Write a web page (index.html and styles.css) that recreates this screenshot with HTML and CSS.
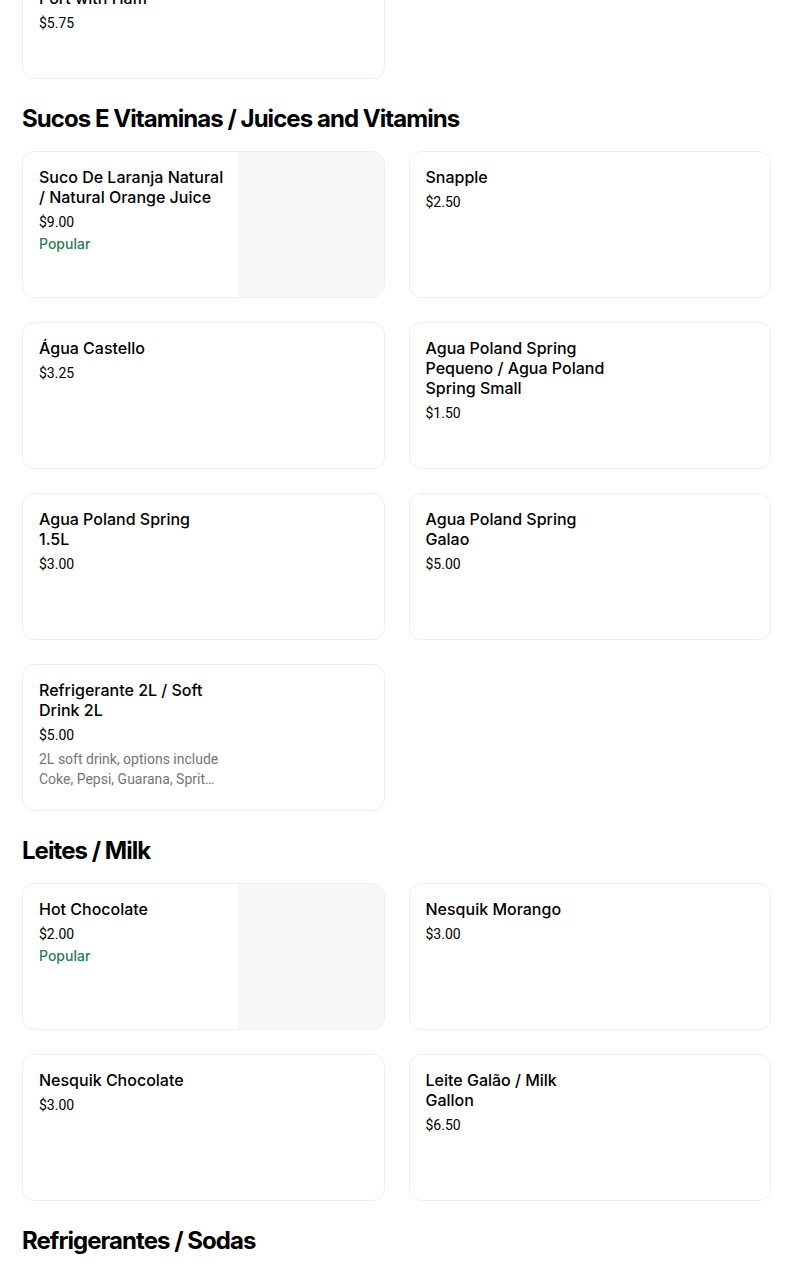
FILE: index.html
```html
<!DOCTYPE html>
<html lang="pt">
<head>
<meta charset="utf-8">
<title>Menu</title>
<link rel="stylesheet" href="styles.css">
</head>
<body>
<main class="menu">
  <section class="section section-first">
    <div class="grid">
      <div class="card">
        <div class="info">
          <div class="title">Pão Português Com Presunto / Bread<br>Port with Ham</div>
          <div class="price">$5.75</div>
        </div>
      </div>
    </div>
  </section>

  <section class="section">
    <h2 class="heading">Sucos E Vitaminas / Juices and Vitamins</h2>
    <div class="grid">
      <div class="card card-img">
        <div class="info">
          <div class="title">Suco De Laranja Natural / Natural Orange Juice</div>
          <div class="price">$9.00</div>
          <div class="popular">Popular</div>
        </div>
        <div class="thumb"></div>
      </div>
      <div class="card">
        <div class="info">
          <div class="title">Snapple</div>
          <div class="price">$2.50</div>
        </div>
      </div>
      <div class="card">
        <div class="info">
          <div class="title">Água Castello</div>
          <div class="price">$3.25</div>
        </div>
      </div>
      <div class="card">
        <div class="info">
          <div class="title">Agua Poland Spring Pequeno / Agua Poland Spring Small</div>
          <div class="price">$1.50</div>
        </div>
      </div>
      <div class="card">
        <div class="info">
          <div class="title">Agua Poland Spring 1.5L</div>
          <div class="price">$3.00</div>
        </div>
      </div>
      <div class="card">
        <div class="info">
          <div class="title">Agua Poland Spring Galao</div>
          <div class="price">$5.00</div>
        </div>
      </div>
      <div class="card">
        <div class="info">
          <div class="title">Refrigerante 2L / Soft Drink 2L</div>
          <div class="price">$5.00</div>
          <div class="desc">2L soft drink, options include Coke, Pepsi, Guarana, Sprite, Fanta and Ginger Ale</div>
        </div>
      </div>
    </div>
  </section>

  <section class="section">
    <h2 class="heading">Leites / Milk</h2>
    <div class="grid">
      <div class="card card-img">
        <div class="info">
          <div class="title">Hot Chocolate</div>
          <div class="price">$2.00</div>
          <div class="popular">Popular</div>
        </div>
        <div class="thumb"></div>
      </div>
      <div class="card">
        <div class="info">
          <div class="title">Nesquik Morango</div>
          <div class="price">$3.00</div>
        </div>
      </div>
      <div class="card">
        <div class="info">
          <div class="title">Nesquik Chocolate</div>
          <div class="price">$3.00</div>
        </div>
      </div>
      <div class="card">
        <div class="info">
          <div class="title">Leite Galão / Milk Gallon</div>
          <div class="price">$6.50</div>
        </div>
      </div>
    </div>
  </section>

  <section class="section">
    <h2 class="heading">Refrigerantes / Sodas</h2>
  </section>
</main>
</body>
</html>
```

FILE: styles.css
```css
html, body {
  margin: 0;
  padding: 0;
  background: #ffffff;
}

body {
  font-family: Inter, "Liberation Sans", Arial, sans-serif;
  color: #000000;
}

.menu {
  width: 749px;
  margin-left: 22px;
}

.section-first {
  margin-top: -68px;
}

.heading {
  margin: 0;
  padding-top: 24px;
  margin-bottom: 16px;
  font-size: 24px;
  line-height: 32px;
  font-weight: 700;
  letter-spacing: -0.95px;
}

.grid {
  display: grid;
  grid-template-columns: 1fr 1fr;
  gap: 24px;
}

.card {
  display: flex;
  height: 147px;
  box-sizing: border-box;
  border: 1px solid #efefef;
  border-radius: 12px;
  overflow: hidden;
  background: #ffffff;
}

.info {
  width: 181px;
  padding: 15px 0 0 16px;
  flex: none;
}

.card-img .info {
  flex: 1;
  width: auto;
  padding-right: 8px;
}

.thumb {
  flex: none;
  margin-left: auto;
  width: 146px;
  height: 100%;
  background: #f7f7f7;
}

.title {
  font-size: 16px;
  line-height: 20px;
  font-weight: 500;
  color: #000000;
}

.price {
  margin-top: 5px;
  font-family: Roboto, "Liberation Sans", Arial, sans-serif;
  font-size: 14px;
  line-height: 20px;
  font-weight: 400;
  color: #000000;
}

.popular {
  margin-top: 2px;
  font-size: 14px;
  line-height: 20px;
  font-weight: 500;
  color: #2a8055;
}

.desc {
  margin-top: 4px;
  font-family: Roboto, "Liberation Sans", Arial, sans-serif;
  font-size: 14px;
  line-height: 20px;
  color: #757575;
  display: -webkit-box;
  -webkit-line-clamp: 2;
  -webkit-box-orient: vertical;
  overflow: hidden;
}
```
